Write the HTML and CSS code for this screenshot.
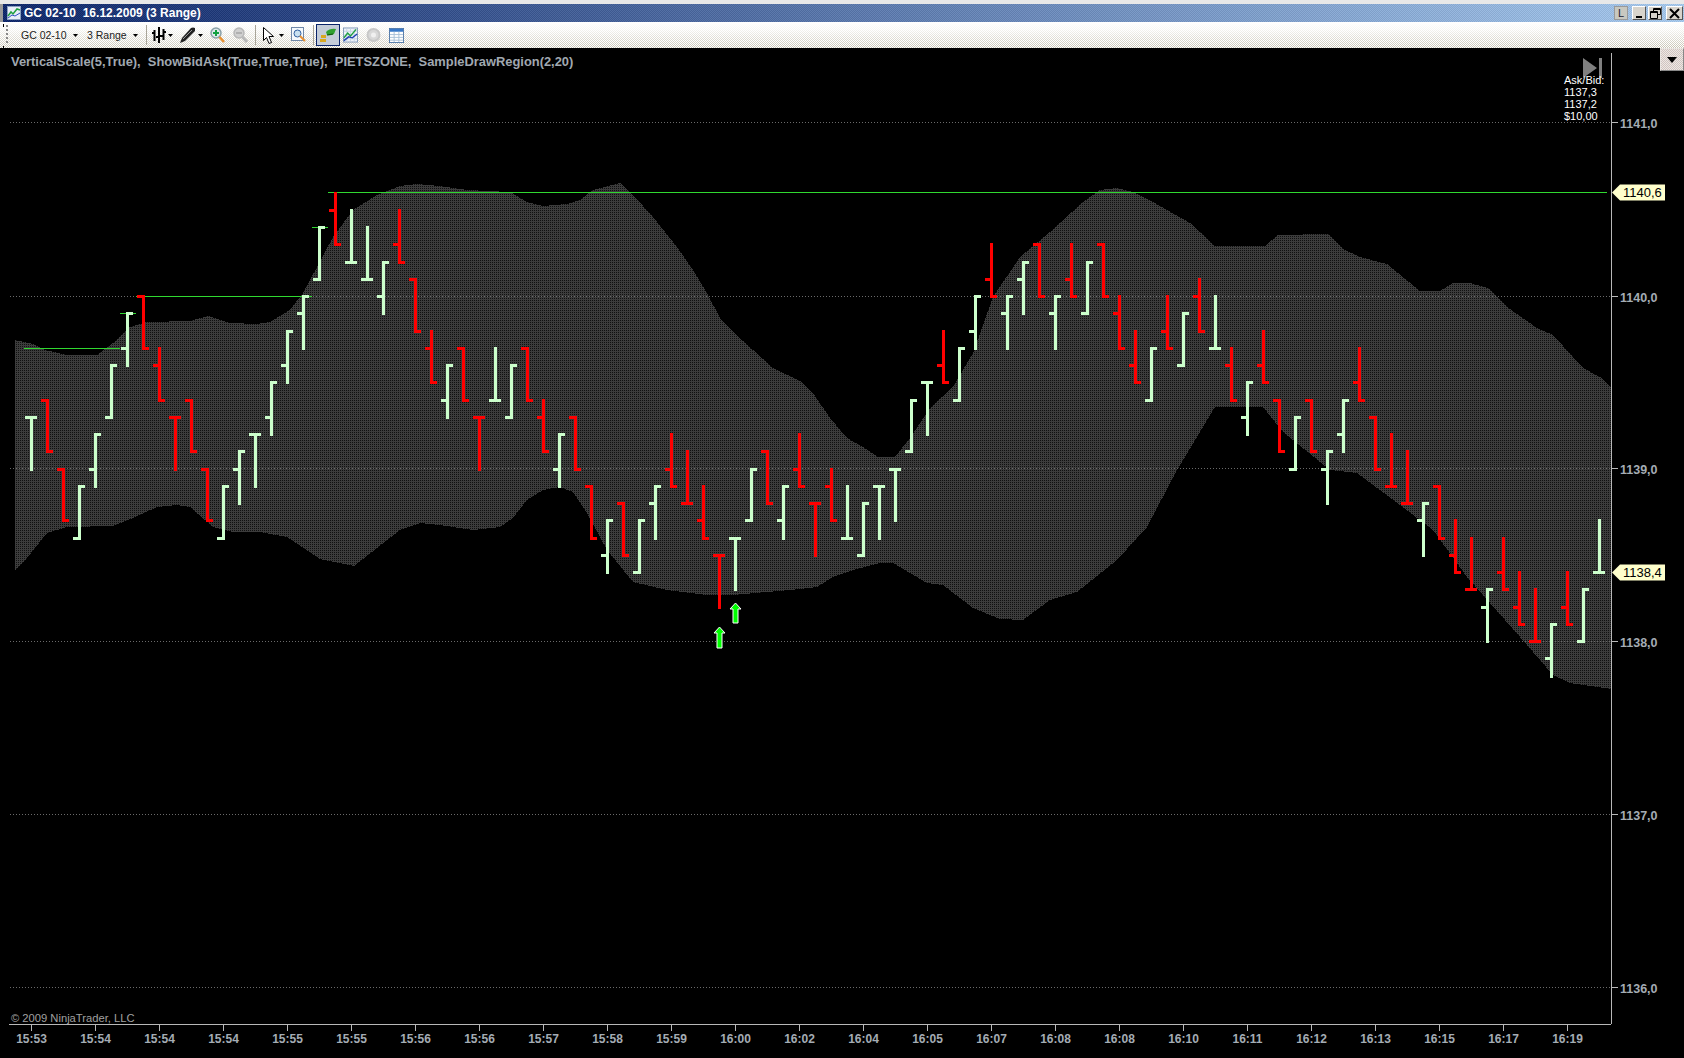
FILE: index.html
```html
<!doctype html>
<html>
<head>
  <meta charset="utf-8">
  <title>GC 02-10 16.12.2009 (3 Range)</title>
  <link rel="stylesheet" href="styles.css">
</head>
<body>

  <div class="window">

    <div class="titlebar">
      <svg class="app-icon" width="14" height="14" viewBox="0 0 14 14">
        <rect x="0.5" y="0.5" width="13" height="13" fill="#e8eef8" stroke="#8aa0c0"/>
        <path d="M1 10 L4 6 L6 8 L10 3 L13 4" fill="none" stroke="#20a040" stroke-width="1.5"/>
        <path d="M1 12 L5 9 L8 10 L13 7" fill="none" stroke="#3050c0"/>
      </svg>
      <span class="title">GC 02-10  16.12.2009 (3 Range)</span>
      <div class="win-buttons">
        <span class="win-btn link">L</span>
        <span class="win-btn min">
          <svg width="9" height="9" viewBox="0 0 9 9"><rect x="1" y="7" width="6" height="2" fill="#000"/></svg>
        </span>
        <span class="win-btn restore">
          <svg width="11" height="11" viewBox="0 0 11 11"><path d="M3.5 3 V0.5 H10.5 V6.5 H8 M0.5 3.5 H7.5 V10.5 H0.5 Z M0.5 4.5 H7.5 M3.5 1.5 H10.5" fill="none" stroke="#000"/></svg>
        </span>
        <span class="win-btn close">
          <svg width="11" height="11" viewBox="0 0 11 11"><path d="M1 1 L10 10 M10 1 L1 10" stroke="#000" stroke-width="2"/></svg>
        </span>
      </div>
    </div>

    <div class="toolbar">
      <span class="grip"></span>

      <span class="combo sym">GC 02-10</span>
      <span class="arrow a-sym"></span>
      <span class="combo range">3 Range</span>
      <span class="arrow a-range"></span>
      <span class="sep s1"></span>

      <svg class="icon i-bars" width="14" height="16" viewBox="0 0 14 16">
        <path d="M2.5 3 V14 M0 6 H2 M7 0 V16 M4 10 H7 M11.5 2 V13 M8 9 H11 M12 5 H14" fill="none" stroke="#000" stroke-width="2"/>
      </svg>
      <span class="arrow a-small"></span>

      <svg class="icon i-pen" width="16" height="16" viewBox="0 0 16 16">
        <path d="M0 16 L2 11 L11 1 Q13 0 15 1 L15 4 L5 14 Z" fill="#222"/>
        <path d="M3 12 L12 3" stroke="#999"/>
      </svg>
      <span class="arrow a-small"></span>

      <svg class="icon i-zoom" width="15" height="16" viewBox="0 0 15 16">
        <circle cx="6" cy="6" r="5" fill="#dce8e8" stroke="#8aa0a8" stroke-width="1.5"/>
        <path d="M6 3 V9 M3 6 H9" stroke="#10a040" stroke-width="2"/>
        <path d="M9.5 10 L14 15" stroke="#e89030" stroke-width="2.5"/>
      </svg>
      <svg class="icon i-zoom-out" width="15" height="16" viewBox="0 0 15 16">
        <circle cx="6" cy="6" r="5" fill="#d0d0d0" stroke="#b8b8b8" stroke-width="1.5"/>
        <path d="M3 6 H9" stroke="#b0b0b0" stroke-width="2"/>
        <path d="M9.5 10 L14 15" stroke="#b8b8b8" stroke-width="3"/>
      </svg>
      <span class="sep s2"></span>

      <svg class="icon i-cursor" width="12" height="17" viewBox="0 0 12 17">
        <path d="M0.5 0.5 V13.5 L3.5 10.5 L6 16.5 L8.5 15.5 L6 9.5 H10.5 Z" fill="#fff" stroke="#000"/>
      </svg>
      <span class="arrow a-cursor"></span>

      <svg class="icon i-doc" width="15" height="16" viewBox="0 0 15 16">
        <rect x="0.5" y="0.5" width="12" height="13" fill="#f4f8fc" stroke="#7088a8"/>
        <circle cx="6.5" cy="6.5" r="3.5" fill="#c8e0f0" stroke="#3060a0"/>
        <path d="M9 9 L14 14" stroke="#e89030" stroke-width="2"/>
      </svg>
      <span class="sep s3"></span>

      <span class="active-btn">
        <svg width="18" height="15" viewBox="0 0 18 15">
          <path d="M7 4 Q11 0 17 1 L15 6 Q12 8 8 7 Z" fill="#30a030"/>
          <path d="M2 7 H7 V10 H2 Z M1 11 H7 V14 H1 Z" fill="#d8a820"/>
          <path d="M8 7 L14 6" stroke="#105010"/>
        </svg>
      </span>

      <svg class="icon i-chart" width="15" height="16" viewBox="0 0 16 16">
        <rect x="0.5" y="0.5" width="15" height="15" fill="#eef2f8" stroke="#8098b8"/>
        <path d="M1 8 H15 M8 1 V15 M1 4 H15 M1 12 H15 M4 1 V15 M12 1 V15" stroke="#c8d4e4"/>
        <path d="M1 11 L5 6 L8 9 L14 2" fill="none" stroke="#20a040" stroke-width="1.5"/>
        <path d="M1 14 L6 10 L10 11 L15 7" fill="none" stroke="#2040b0" stroke-width="1.5"/>
      </svg>
      <svg class="icon i-circle" width="15" height="16" viewBox="0 0 15 16">
        <circle cx="7.5" cy="8" r="6" fill="#d8d8d8" stroke="#c8c8c8" stroke-width="2"/>
        <circle cx="7.5" cy="8" r="2.5" fill="#f0f0f0"/>
      </svg>
      <svg class="icon i-table" width="15" height="15" viewBox="0 0 16 16">
        <rect x="0.5" y="0.5" width="15" height="15" fill="#fff" stroke="#5078a8"/>
        <rect x="1" y="1" width="14" height="3" fill="#3878c8"/>
        <path d="M1 7 H15 M1 10 H15 M1 13 H15 M5.5 4 V15 M10.5 4 V15" stroke="#a8c0d8"/>
      </svg>
    </div>

    <div class="chart">
      <svg id="plot" width="1684" height="1010" viewBox="0 48 1684 1010">
        <defs>
          <pattern id="dots" width="2" height="2" patternUnits="userSpaceOnUse">
            <rect width="2" height="2" fill="#3c3c3c"/>
            <rect width="1" height="1" fill="#101010"/>
          </pattern>
        </defs>
        <polygon id="band" fill="url(#dots)"/>
        <g id="grid"></g>
        <g id="levels"></g>
        <path id="up-bars"/>
        <path id="down-bars"/>
        <g id="axes"></g>

        <path class="signal" d="M719.5 627 L725 633 H722 V648 H717 V633 H714 Z"/>
        <path class="signal" d="M735.5 603 L741 609 H738 V623 H733 V609 H730 Z"/>

        <path class="replay" d="M1583 58 L1597 68 L1583 78 Z M1599 58 H1602 V78 H1599 Z"/>

        <text class="indicators" x="11" y="66" xml:space="preserve">VerticalScale(5,True),  ShowBidAsk(True,True,True),  PIETSZONE,  SampleDrawRegion(2,20)</text>

        <text class="askbid" x="1564" y="84">Ask/Bid:</text>
        <text class="askbid" x="1564" y="96">1137,3</text>
        <text class="askbid" x="1564" y="108">1137,2</text>
        <text class="askbid" x="1564" y="120">$10,00</text>

        <path class="flag" d="M1612 192.5 L1620 184.5 H1665 V200.5 H1620 Z"/>
        <text class="flag-text" x="1623" y="197">1140,6</text>
        <path class="flag" d="M1612 572.5 L1620 564.5 H1665 V580.5 H1620 Z"/>
        <text class="flag-text" x="1623" y="577">1138,4</text>

        <text class="copyright" x="11" y="1022">© 2009 NinjaTrader, LLC</text>
      </svg>
      <span class="scroll-btn"></span>
    </div>

  </div>

  <script src="chart.js"></script>

</body>
</html>
```

FILE: styles.css
```css
html, body {
  height: 100%;
  margin: 0;
}

body {
  background: #000;
  font-family: "Liberation Sans", Arial, sans-serif;
  overflow: hidden;
}

.window {
  display: flex;
  flex-direction: column;
  height: 100%;
  padding-top: 4px;
  box-sizing: border-box;
  background: #e8e8e8;
}

/* title bar */

.titlebar {
  display: flex;
  align-items: center;
  flex: 0 0 18px;
  padding-left: 4px;
  border-left: 3px solid #9a9a9a;
  background:
    repeating-conic-gradient(rgba(255, 255, 255, 0.07) 0 25%, rgba(0, 0, 0, 0.07) 0 50%) 0 0 / 2px 2px,
    linear-gradient(to right, #0a246a 0%, #a6caf0 100%);
}

.app-icon {
  flex: none;
}

.title {
  margin-left: 3px;
  color: #fff;
  font-size: 12px;
  font-weight: bold;
  white-space: pre;
}

.win-buttons {
  display: flex;
  margin-left: auto;
  padding-right: 1px;
}

.win-btn {
  display: flex;
  justify-content: center;
  align-items: center;
  width: 14px;
  height: 14px;
  margin-left: 2px;
  box-sizing: border-box;
  background: #d8d4cc;
  border: 1px solid;
  border-color: #fff #555 #555 #fff;
  font-size: 11px;
}

.win-btn.link {
  margin-right: 2px;
  color: #223;
  background: #c8c8c0;
  border-color: #999;
}

.win-btn.close {
  width: 17px;
  margin-left: 4px;
}

/* tool bar */

.toolbar {
  position: relative;
  display: flex;
  align-items: center;
  flex: 0 0 26px;
  padding-left: 6px;
  background:
    linear-gradient(to bottom, #fff 0%, rgba(255, 255, 255, 0.8) 30%, rgba(255, 255, 255, 0) 100%),
    repeating-conic-gradient(#fff 0 25%, #c8c4b4 0 50%) 0 0 / 2px 2px;
}

.toolbar::before,
.toolbar::after {
  content: "";
  position: absolute;
  left: 3px;
  width: 1px;
  height: 3px;
  background: #000;
}

.toolbar::before {
  top: 2px;
}

.toolbar::after {
  bottom: -1px;
}

.grip {
  width: 2px;
  height: 20px;
  background: repeating-linear-gradient(to bottom, #888 0 2px, transparent 2px 4px);
}

.combo {
  color: #222;
  font-size: 10.5px;
  white-space: nowrap;
}

.combo.sym {
  width: 46px;
  margin-left: 13px;
}

.combo.range {
  width: 40px;
  margin-left: 9px;
}

.arrow {
  width: 5px;
  height: 3px;
  margin-top: 1px;
  background: #000;
  clip-path: polygon(0 0, 100% 0, 50% 100%);
}

.a-sym {
  margin-left: 6px;
}

.a-range {
  margin-left: 6px;
}

.a-small {
  margin-left: 2px;
}

.a-cursor {
  margin-left: 4px;
}

.sep {
  width: 1px;
  height: 20px;
  margin-left: 7px;
  background: #a8a498;
}

.s1 {
  margin-left: 8px;
}

.active-btn {
  display: flex;
  justify-content: center;
  align-items: center;
  width: 24px;
  height: 22px;
  margin-left: 2px;
  box-sizing: border-box;
  background: #c4ccd8;
  border: 1px solid #0a246a;
}

.icon {
  flex: none;
}

.i-bars { margin-left: 5px; }
.i-pen { margin-left: 7px; }
.i-zoom { margin-left: 7px; }
.i-zoom-out { margin-left: 8px; }
.i-cursor { margin-left: 7px; }
.i-doc { margin-left: 7px; }
.i-chart { margin-left: 3px; }
.i-circle { margin-left: 8px; }
.i-table { margin-left: 8px; }

/* chart */

.chart {
  position: relative;
  flex: 1;
  background: #000;
}

#plot {
  display: block;
}

#up-bars {
  fill: #ccffcc;
  shape-rendering: crispEdges;
}

#down-bars {
  fill: #ff0000;
  shape-rendering: crispEdges;
}

#band {
  shape-rendering: crispEdges;
}

.grid-line {
  stroke: #6a6a6a;
  stroke-dasharray: 1 2;
  shape-rendering: crispEdges;
}

.level {
  stroke: #30d830;
  shape-rendering: crispEdges;
}

.axis-line {
  stroke: #b8b8b8;
  shape-rendering: crispEdges;
}

.axis-label {
  fill: #a4acb4;
  font-size: 12.5px;
  font-weight: bold;
}

.time-label {
  fill: #a4acb4;
  font-size: 12px;
  font-weight: bold;
  text-anchor: middle;
}

.indicators {
  fill: #a0a8b0;
  font-size: 12.9px;
  font-weight: bold;
  white-space: pre;
}

.askbid {
  fill: #fff;
  font-size: 11px;
}

.flag {
  fill: #ffffcc;
}

.flag-text {
  fill: #000;
  font-size: 13px;
}

.copyright {
  fill: #a0a0a0;
  font-size: 11.2px;
}

.signal {
  fill: #00ff00;
  stroke: #fff;
  stroke-width: 1;
}

.replay {
  fill: #808080;
}

.scroll-btn {
  position: absolute;
  top: 0;
  right: 0;
  width: 24px;
  height: 23px;
  box-sizing: border-box;
  background: repeating-conic-gradient(#eee8e4 0 25%, #d0c4c0 0 50%) 0 0 / 2px 2px;
  border: 1px solid;
  border-color: #e8e4e0 #888 #888 #e8e4e0;
}

.scroll-btn::after {
  content: "";
  position: absolute;
  top: 8px;
  left: 6px;
  border-style: solid;
  border-width: 6px 5px 0;
  border-color: #000 transparent transparent;
}
```

FILE: chart.js
```js
// bars: colour, high, open, close, in ticks above 1138,0. every bar is 3 ticks high
var BARS = [
  'g13,13,13', 'r14,14,11', 'r10,10,7', 'g9,6,9', 'g12,10,12', 'g16,13,16', 'g19,17,19', 'r20,20,17',
  'r17,16,14', 'r13,13,13', 'r14,14,11', 'r10,10,7', 'g9,6,9', 'g11,10,11', 'g12,12,12', 'g15,13,15',
  'g18,16,18', 'g20,19,20', 'g24,21,24', 'r26,25,23', 'g25,22,22', 'g24,21,21', 'g22,20,22', 'r25,23,22',
  'r21,21,18', 'r18,17,15', 'g16,14,16', 'r17,17,14', 'r13,13,13', 'g17,14,14', 'g16,13,16', 'r17,17,14',
  'r14,13,11', 'g12,10,12', 'r13,13,10', 'r9,9,6', 'g7,5,7', 'r8,8,5', 'g7,4,7', 'g9,8,9',
  'r12,10,9', 'r11,8,8', 'r9,7,6', 'r5,5,5', 'g6,6,6', 'g10,7,10', 'r11,11,8', 'g9,7,9',
  'r12,10,9', 'r8,8,8', 'r10,9,7', 'g9,6,6', 'g8,5,8', 'g9,9,9', 'g10,10,10', 'g14,11,14',
  'g15,15,15', 'r18,16,15', 'g17,14,17', 'g20,18,20', 'r23,21,20', 'g20,19,20', 'g22,21,22', 'r23,23,20',
  'g20,19,20', 'r23,21,20', 'g22,19,22', 'r23,23,20', 'r20,19,17', 'r18,16,15', 'g17,14,17', 'r20,18,17',
  'g19,16,19', 'r21,20,18', 'g20,17,17', 'r17,16,14', 'g15,13,15', 'r18,16,15', 'r14,14,11', 'g13,10,13',
  'r14,14,11', 'g11,10,11', 'g14,12,14', 'r17,15,14', 'r13,13,10', 'r12,9,9', 'r11,8,8', 'g8,7,8',
  'r9,9,6', 'r7,5,4', 'r6,3,3', 'g3,2,3', 'r6,4,3', 'r4,2,1', 'r3,0,0', 'g1,-1,1',
  'r4,2,1', 'g3,0,3', 'g7,4,4'
];

var UPPER = [
  [15,340],[33,344],[45,350],[67,355],[97,355],[113,343],[130,327],[147,322],[190,321],[208,316],[230,323],
  [257,324],[270,322],[290,310],[303,293],[317,267],[333,237],[353,210],[377,195],[400,186],[417,184],
  [440,186],[467,190],[510,192],[527,202],[543,206],[567,204],[580,200],[593,190],[620,183],[633,195],
  [653,217],[677,247],[693,270],[707,293],[720,318],[733,332],[753,350],[773,368],[800,381],[813,393],
  [830,418],[847,438],[863,447],[878,457],[895,457],[910,438],[930,408],[953,387],[973,353],[993,297],
  [1020,257],[1050,232],[1083,202],[1100,190],[1117,188],[1133,192],[1153,202],[1167,210],[1190,223],
  [1200,232],[1215,246],[1265,246],[1278,235],[1328,234],[1343,249],[1360,257],[1387,264],[1420,291],
  [1440,291],[1453,283],[1470,283],[1488,288],[1507,307],[1537,328],[1553,335],[1583,368],[1600,377],[1611,387]
];

var LOWER = [
  [15,571],[27,558],[47,533],[67,527],[113,526],[133,518],[157,507],[177,505],[190,507],[213,527],[233,532],
  [260,532],[287,537],[320,559],[354,566],[400,530],[420,523],[440,525],[473,530],[500,527],[513,518],
  [527,500],[543,490],[560,487],[573,492],[587,513],[607,550],[633,582],[667,590],[707,595],[733,595],
  [767,592],[800,589],[817,587],[833,577],[853,570],[880,563],[893,563],[927,583],[943,585],[973,608],
  [1000,619],[1023,620],[1050,600],[1077,592],[1117,560],[1147,527],[1177,470],[1200,432],[1215,407],
  [1263,407],[1283,432],[1330,470],[1357,473],[1400,505],[1433,530],[1467,577],[1520,637],[1553,675],
  [1570,683],[1611,689]
];

var TIMES = [
  '15:53', '15:54', '15:54', '15:54', '15:55', '15:55', '15:56', '15:56', '15:57', '15:58', '15:59', '16:00',
  '16:02', '16:04', '16:05', '16:07', '16:08', '16:08', '16:10', '16:11', '16:12', '16:13', '16:15', '16:17', '16:19'
];

var PRICES = [
  ['1141,0', 122], ['1140,0', 296], ['1139,0', 468], ['1138,0', 641], ['1137,0', 814], ['1136,0', 987]
];

var LEVELS = [
  [24, 120, 348], [120, 136, 313], [136, 312, 296], [312, 328, 227], [328, 1607, 192]
];

var SVG_NS = 'http://www.w3.org/2000/svg';

function el(parent, name, attrs, text) {
  var node = document.createElementNS(SVG_NS, name);
  for (var key in attrs) node.setAttribute(key, attrs[key]);
  if (text) node.textContent = text;
  document.getElementById(parent).appendChild(node);
}

function priceY(tick) {
  return Math.round(296 + (20 - tick) * 17.25);
}

function box(x, y, w, h) {
  return 'M' + x + ' ' + y + 'h' + w + 'v' + h + 'h' + (-w) + 'z';
}

function line(parent, cls, x1, y1, x2, y2) {
  el(parent, 'line', {'class': cls, x1: x1, y1: y1 + 0.5, x2: x2, y2: y2 + 0.5});
}

function drawBand() {
  var points = UPPER.concat(LOWER.slice().reverse());
  document.getElementById('band').setAttribute('points', points.join(' '));
}

function drawBars() {
  var up = '', down = '';
  BARS.forEach(function (bar, i) {
    var v = bar.slice(1).split(',').map(Number);
    var x = 30 + 16 * i;
    var top = priceY(v[0]) - 1;
    var d = box(x, top, 3, priceY(v[0] - 3) - top + 2) +
      box(x - 5, priceY(v[1]) - 1, 5, 3) +
      box(x + 3, priceY(v[2]) - 1, 4, 3);
    if (bar[0] == 'g') up += d;
    else down += d;
  });
  document.getElementById('up-bars').setAttribute('d', up);
  document.getElementById('down-bars').setAttribute('d', down);
}

function drawAxes() {
  PRICES.forEach(function (p) {
    line('grid', 'grid-line', 10, p[1], 1611, p[1]);
    line('axes', 'axis-line', 1611, p[1], 1618, p[1]);
    el('axes', 'text', {'class': 'axis-label', x: 1620, y: p[1] + 6}, p[0]);
  });
  el('axes', 'line', {'class': 'axis-line', x1: 1611.5, y1: 53, x2: 1611.5, y2: 1024});
  line('axes', 'axis-line', 9, 1024, 1611, 1024);
  TIMES.forEach(function (t, i) {
    var x = 31.5 + 64 * i;
    el('axes', 'line', {'class': 'axis-line', x1: x, y1: 1024, x2: x, y2: 1031});
    el('axes', 'text', {'class': 'time-label', x: x, y: 1043}, t);
  });
  LEVELS.forEach(function (l) {
    line('levels', 'level', l[0], l[2], l[1], l[2]);
  });
}

drawBand();
drawAxes();
drawBars();
```
